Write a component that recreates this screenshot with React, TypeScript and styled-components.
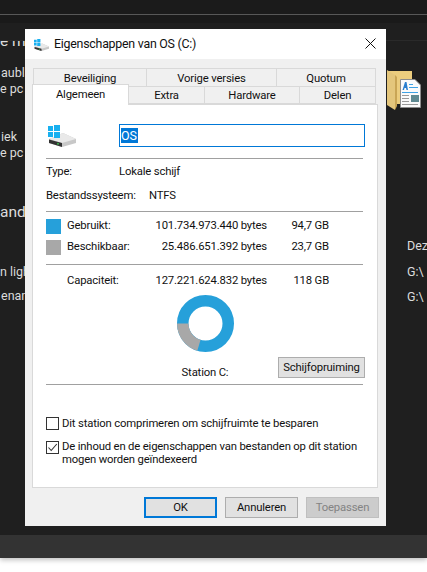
import React from "react";
import styled, { createGlobalStyle } from "styled-components";

const Global = createGlobalStyle`
  html, body { margin: 0; padding: 0; background: #fff; }
  #root { width: 427px; height: 572px; overflow: hidden; }
  * { box-sizing: border-box; }
`;

const Page = styled.div`
  position: relative;
  width: 427px;
  height: 572px;
  overflow: hidden;
  font-family: Roboto, "Open Sans", sans-serif;
  background: #fff;
`;
const Explorer = styled.div`
  height: 558px;
  background: #1f1f1f;
  display: flex;
  flex-direction: column;
  color: #dcdcdc;
  box-shadow: 0 2px 5px rgba(0,0,0,.25);
`;
const TopBar = styled.div`
  height: 15px;
  flex: none;
  background: #1b1b1b;
  border-bottom: 1px solid #585858;
`;
const Ribbon = styled.div`
  height: 26px;
  flex: none;
  background: linear-gradient(#1a1a1a 0 8px, #1f1f1f 8px);
  border-bottom: 1px solid #2a2a2a;
`;
const Content = styled.div`
  flex: 1;
  display: flex;
  justify-content: space-between;
  min-height: 0;
`;
const LeftCol = styled.div`
  width: 25px;
  overflow: hidden;
  white-space: nowrap;
  display: flex;
  flex-direction: column;
`;
const RightCol = styled.div`
  width: 41px;
  overflow: hidden;
  white-space: nowrap;
  padding-top: 29px;
  display: flex;
  flex-direction: column;
`;
const BgText = styled.div<{ $top: number; $size?: number; $x?: number }>`
  margin-top: ${p => p.$top}px;
  padding-left: ${p => p.$x ?? 0}px;
  font-size: ${p => p.$size ?? 12.5}px;
  line-height: 16px;
`;
const RightText = styled(BgText)`
  padding-left: 21px;
`;
const Status = styled.div`
  height: 23px;
  flex: none;
  background: #333;
`;
const FolderIcon = styled.svg`
  display: block;
  width: 36px;
  height: 42px;
`;
const Window = styled.div`
  position: absolute;
  left: 25px;
  top: 29px;
  width: 361px;
  height: 497px;
  background: #f0f0f0;
  display: flex;
  flex-direction: column;
  color: #111;
  font-size: 11.3px;
  letter-spacing: -0.17px;
  line-height: 16px;
`;
const TitleBar = styled.div`
  height: 30px;
  flex: none;
  background: #fff;
  display: flex;
  align-items: center;
  padding: 0 10px 0 9px;
`;
const TitleIcon = styled.svg`
  display: block;
  width: 15px;
  height: 12px;
  margin: 2px 5px 0 0;
`;
const TitleText = styled.span`
  flex: 1;
  font-size: 12.4px;
  letter-spacing: -0.25px;
`;
const CloseIcon = styled.svg`
  display: block;
  width: 11px;
  height: 11px;
  margin-top: -2px;
`;
const Tabs = styled.div`
  margin: 9px 8px 0 7px;
  flex: none;
  position: relative;
  z-index: 1;
`;
const BackRow = styled.div`
  display: flex;
  padding-left: 1px;
  height: 16px;
`;
const FrontRow = styled.div`
  display: flex;
  height: 20px;
`;
const Tab = styled.div<{ $w: number; $active?: boolean }>`
  width: ${p => p.$w}px;
  height: ${p => (p.$active ? 21 : 18)}px;
  margin-top: ${p => (p.$active ? 0 : 2)}px;
  padding-top: ${p => (p.$active ? 2 : 1)}px;
  background: ${p => (p.$active ? "#fff" : "#f0f0f0")};
  border: 1px solid #d9d9d9;
  border-bottom: ${p => (p.$active ? "none" : "1px solid #d9d9d9")};
  border-left-width: ${p => (p.$active ? 1 : 0)}px;
  text-align: center;
  line-height: 16px;
  flex: none;
`;
const BackTab = styled(Tab)`
  margin-top: 0;
  height: 18px;
  border-bottom: none;
  padding-top: 2px;
  &:first-child { border-left-width: 1px; }
`;
const Panel = styled.div`
  margin: 0 8px 0 7px;
  height: 384px;
  flex: none;
  background: #fff;
  border: 1px solid #d9d9d9;
  padding: 0 14px 0 13px;
  display: flex;
  flex-direction: column;
`;
const NameRow = styled.div`
  display: flex;
  align-items: flex-end;
  height: 42px;
  flex: none;
`;
const DriveIcon = styled.svg`
  display: block;
  width: 28px;
  height: 22px;
  margin: 0 43px 0 2px;
`;
const NameBox = styled.div`
  flex: 1;
  height: 23px;
  border: 1px solid #0078d7;
  padding: 3px 1px;
  margin-right: -2px;
`;
const Selected = styled.span`
  display: block;
  width: 17px;
  background: #0078d7;
  color: #fff;
  height: 15px;
  line-height: 15px;
  font-size: 12.5px;
`;
const Rule = styled.div<{ $top: number }>`
  height: 1px;
  flex: none;
  background: #a0a0a0;
  margin-top: ${p => p.$top}px;
`;
const InfoRow = styled.div<{ $top: number }>`
  display: flex;
  height: 16px;
  flex: none;
  margin-top: ${p => p.$top}px;
`;
const InfoLabel = styled.span<{ $w: number }>`
  width: ${p => p.$w}px;
  flex: none;
`;
const Usage = styled.div<{ $top: number }>`
  display: grid;
  grid-template-columns: 15px 6px 80px 120px 62px;
  align-items: center;
  height: 15px;
  flex: none;
  margin-top: ${p => p.$top}px;
`;
const Swatch = styled.span<{ $c?: string }>`
  width: 15px;
  height: 15px;
  background: ${p => p.$c ?? "transparent"};
`;
const Cell = styled.span<{ $right?: boolean }>`
  text-align: ${p => (p.$right ? "right" : "left")};
  white-space: nowrap;
`;
const ChartRow = styled.div`
  display: grid;
  grid-template-columns: 232px 87px;
  align-items: end;
  flex: none;
  margin-top: 7px;
`;
const ChartCol = styled.div`
  display: flex;
  flex-direction: column;
  align-items: center;
  padding-left: 86px;
  gap: 13px;
`;
const Donut = styled.svg`
  display: block;
  width: 57px;
  height: 57px;
`;
const FlatButton = styled.div<{ $disabled?: boolean; $default?: boolean }>`
  height: 21px;
  background: ${p => (p.$disabled ? "#cccccc" : "#e1e1e1")};
  border: ${p => (p.$default ? "2px solid #0078d7" : p.$disabled ? "1px solid #bfbfbf" : "1px solid #adadad")};
  color: ${p => (p.$disabled ? "#838383" : "#111")};
  text-align: center;
  line-height: ${p => (p.$default ? 17 : 19)}px;
  white-space: nowrap;
`;
const CleanupButton = styled(FlatButton)`
  margin-bottom: 3px;
`;
const FooterButton = styled(FlatButton)`
  width: 73px;
`;
const CheckRow = styled.div<{ $top: number }>`
  display: flex;
  gap: 3px;
  margin-top: ${p => p.$top}px;
  flex: none;
`;
const CheckBox = styled.span`
  width: 13px;
  height: 13px;
  border: 1px solid #333;
  background: #fff;
  flex: none;
  margin-top: 1px;
  display: block;
`;
const CheckMark = styled.svg`
  display: block;
  width: 11px;
  height: 11px;
`;
const CheckLabel = styled.span<{ $pad?: number }>`
  line-height: 13px;
  padding-top: ${p => p.$pad ?? 0}px;
  white-space: nowrap;
`;
const Footer = styled.div`
  display: flex;
  justify-content: flex-end;
  gap: 8px;
  padding: 9px 7px 0 0;
`;

const Drive = () => (
  <>
    <path d="M1 14 L15 8 L28 14 V18 L14 22 L1 18 Z" fill="#c8c8c8" />
    <path d="M15 8 L28 14 L14 18 L1 14 Z" fill="#e9e9e9" />
    <path d="M1 14.5 L14 18 V22 L1 18 Z" fill="#333" />
    <circle cx="10" cy="18.7" r="1" fill="#38b54a" />
    <path d="M0 1 H5 V6 H0 Z M6 0 H12 V6 H6 Z M0 7 H5 V12 H0 Z M6 7 H12 V13 H6 Z" fill="#18b0f0" />
  </>
);

export default function App() {
  return (
    <Page>
      <Global />
      <Explorer>
        <TopBar />
        <Ribbon />
        <Content>
          <LeftCol>
            <BgText $top={-8} $size={15.5}>e ma</BgText>
            <BgText $top={16} $x={1}>aubla</BgText>
            <BgText $top={0}>e pc</BgText>
            <BgText $top={32} $x={1}>iek</BgText>
            <BgText $top={0}>e pc</BgText>
            <BgText $top={43} $size={15.5}>ande</BgText>
            <BgText $top={44}>n ligh</BgText>
            <BgText $top={8} $x={1}>enam</BgText>
          </LeftCol>
          <RightCol>
            <FolderIcon viewBox="0 0 36 42">
              <path d="M1 1 H26 V34 H1 Z" fill="#eccd7e" />
              <path d="M1 0 L9 5 V40 L1 35 Z" fill="#e4c67c" />
              <path d="M9 5 V40 L11 36 V7 Z" fill="#c9a555" />
              <path d="M14.5 9.5 H29 L34.5 15 V37.5 H14.5 Z" fill="#fbfbfb" stroke="#8d8d8d" />
              <path d="M16.5 20 L19 12 H20.5 L22 20 H20.5 L20 18 H18.5 L18 20 Z" fill="#2a7fd0" />
              <path d="M23 14.5 H27 M23 17.5 H32 M16 22.5 H32" stroke="#3fa3e6" strokeWidth="1" />
              <path d="M16 25.5 H23 M16 28.5 H23 M16 31.5 H23 M16 34.5 H32" stroke="#9a9a9a" strokeWidth="1" />
              <rect x="25" y="25" width="8" height="7" fill="#5f8a92" />
            </FolderIcon>
            <RightText $top={126}>Dez</RightText>
            <RightText $top={10}>G:\</RightText>
            <RightText $top={9}>G:\</RightText>
          </RightCol>
        </Content>
        <Status />
      </Explorer>
      <Window>
        <TitleBar>
          <TitleIcon viewBox="0 0 28 22"><Drive /></TitleIcon>
          <TitleText>Eigenschappen van OS (C:)</TitleText>
          <CloseIcon viewBox="0 0 11 11">
            <path d="M.5 .5 L10.5 10.5 M10.5 .5 L.5 10.5" stroke="#111" strokeWidth="1" />
          </CloseIcon>
        </TitleBar>
        <Tabs>
          <BackRow>
            <BackTab $w={114}>Beveiliging</BackTab>
            <BackTab $w={130}>Vorige versies</BackTab>
            <BackTab $w={99}>Quotum</BackTab>
          </BackRow>
          <FrontRow>
            <Tab $w={97} $active>Algemeen</Tab>
            <Tab $w={76}>Extra</Tab>
            <Tab $w={95}>Hardware</Tab>
            <Tab $w={76}>Delen</Tab>
          </FrontRow>
        </Tabs>
        <Panel>
          <NameRow>
            <DriveIcon viewBox="0 0 28 22"><Drive /></DriveIcon>
            <NameBox><Selected>OS</Selected></NameBox>
          </NameRow>
          <Rule $top={11} />
          <InfoRow $top={5}>
            <InfoLabel $w={73}>Type:</InfoLabel>
            <span>Lokale schijf</span>
          </InfoRow>
          <InfoRow $top={8}>
            <InfoLabel $w={103}>Bestandssysteem:</InfoLabel>
            <span>NTFS</span>
          </InfoRow>
          <Rule $top={7} />
          <Usage $top={6}>
            <Swatch $c="#26a0da" /><span /><Cell>Gebruikt:</Cell>
            <Cell $right>101.734.973.440 bytes</Cell><Cell $right>94,7 GB</Cell>
          </Usage>
          <Usage $top={6}>
            <Swatch $c="#a8a8a8" /><span /><Cell>Beschikbaar:</Cell>
            <Cell $right>25.486.651.392 bytes</Cell><Cell $right>23,7 GB</Cell>
          </Usage>
          <Rule $top={10} />
          <Usage $top={8}>
            <Swatch /><span /><Cell>Capaciteit:</Cell>
            <Cell $right>127.221.624.832 bytes</Cell><Cell $right>118 GB</Cell>
          </Usage>
          <ChartRow>
            <ChartCol>
              <Donut viewBox="0 0 57 57">
                <circle cx="28.5" cy="28.5" r="22.75" fill="none" stroke="#26a0da" strokeWidth="11.5" />
                <path d="M0 28.5 A28.5 28.5 0 0 0 20.3 55.8 L23.6 44.8 A17 17 0 0 1 11.5 28.5 Z" fill="#a8a8a8" />
              </Donut>
              <span>Station C:</span>
            </ChartCol>
            <CleanupButton>Schijfopruiming</CleanupButton>
          </ChartRow>
          <Rule $top={3} />
          <CheckRow $top={31}>
            <CheckBox />
            <CheckLabel $pad={1}>Dit station comprimeren om schijfruimte te besparen</CheckLabel>
          </CheckRow>
          <CheckRow $top={10}>
            <CheckBox>
              <CheckMark viewBox="0 0 11 11">
                <path d="M1.5 5.5 L4.2 8.5 L9.8 2" fill="none" stroke="#333" strokeWidth="1.1" />
              </CheckMark>
            </CheckBox>
            <CheckLabel>
              De inhoud en de eigenschappen van bestanden op dit station<br />
              mogen worden geïndexeerd
            </CheckLabel>
          </CheckRow>
        </Panel>
        <Footer>
          <FooterButton $default>OK</FooterButton>
          <FooterButton>Annuleren</FooterButton>
          <FooterButton $disabled>Toepassen</FooterButton>
        </Footer>
      </Window>
    </Page>
  );
}
